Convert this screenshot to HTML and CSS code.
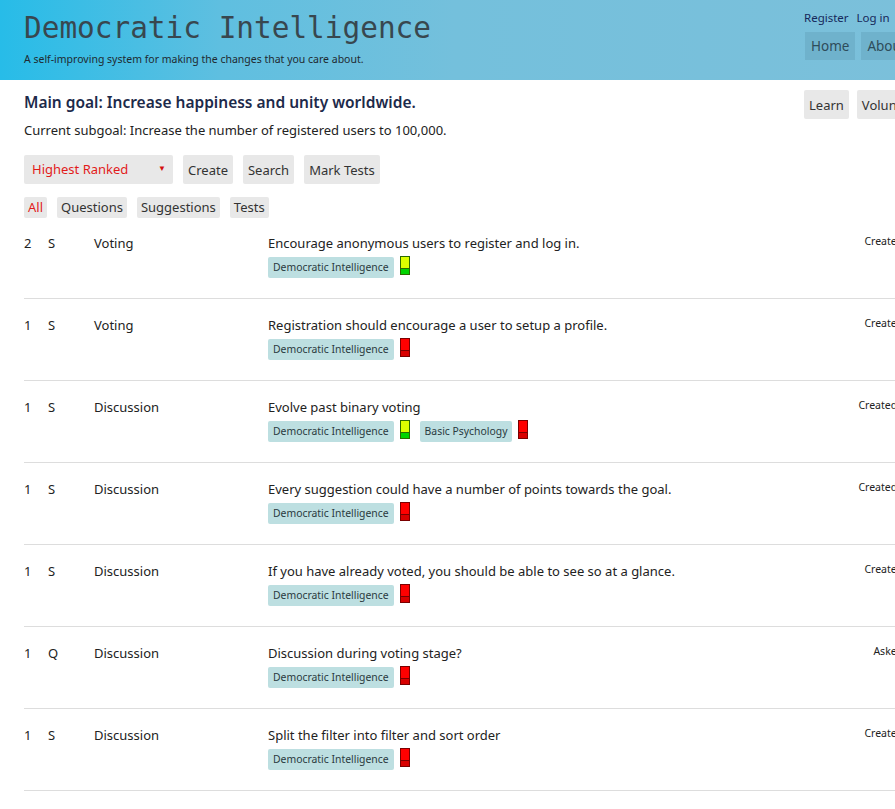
FILE: index.html
```html
<!DOCTYPE html>
<html lang="en">
<head>
<meta charset="utf-8">
<title>Democratic Intelligence</title>
<link rel="stylesheet" href="styles.css">
</head>
<body>
<div class="site">
  <header class="site-header">
    <div class="brand">
      <h1 class="brand-title">Democratic Intelligence</h1>
      <p class="brand-tagline">A self-improving system for making the changes that you care about.</p>
    </div>
    <nav class="top-nav">
      <div class="account-links">
        <a href="#">Register</a>
        <a href="#">Log in</a>
      </div>
      <div class="nav-buttons">
        <a class="nav-btn" href="#">Home</a>
        <a class="nav-btn" href="#">About</a>
      </div>
    </nav>
  </header>

  <main class="page">
    <section class="goal-row">
      <div class="goals">
        <h2 class="main-goal">Main goal: Increase happiness and unity worldwide.</h2>
        <p class="subgoal">Current subgoal: Increase the number of registered users to 100,000.</p>
      </div>
      <div class="goal-buttons">
        <button class="btn">Learn</button>
        <button class="btn">Volunteer</button>
      </div>
    </section>

    <div class="toolbar">
      <div class="select">Highest Ranked<span class="caret">&#9660;</span></div>
      <button class="btn">Create</button>
      <button class="btn">Search</button>
      <button class="btn">Mark Tests</button>
    </div>

    <div class="filters">
      <button class="chip active">All</button>
      <button class="chip">Questions</button>
      <button class="chip">Suggestions</button>
      <button class="chip">Tests</button>
    </div>

    <ul class="items">
      <li class="item">
        <span class="score">2</span><span class="kind">S</span><span class="cat">Voting</span>
        <div class="body">
          <div class="title">Encourage anonymous users to register and log in.</div>
          <div class="tags"><span class="tag">Democratic Intelligence</span><span class="meter yellow"></span></div>
        </div>
        <span class="meta">Created 3 months ago</span>
      </li>
      <li class="item">
        <span class="score">1</span><span class="kind">S</span><span class="cat">Voting</span>
        <div class="body">
          <div class="title">Registration should encourage a user to setup a profile.</div>
          <div class="tags"><span class="tag">Democratic Intelligence</span><span class="meter red"></span></div>
        </div>
        <span class="meta">Created 3 months ago</span>
      </li>
      <li class="item">
        <span class="score">1</span><span class="kind">S</span><span class="cat">Discussion</span>
        <div class="body">
          <div class="title">Evolve past binary voting</div>
          <div class="tags"><span class="tag">Democratic Intelligence</span><span class="meter yellow"></span><span class="tag">Basic Psychology</span><span class="meter red"></span></div>
        </div>
        <span class="meta">Created 10 months ago</span>
      </li>
      <li class="item">
        <span class="score">1</span><span class="kind">S</span><span class="cat">Discussion</span>
        <div class="body">
          <div class="title">Every suggestion could have a number of points towards the goal.</div>
          <div class="tags"><span class="tag">Democratic Intelligence</span><span class="meter red"></span></div>
        </div>
        <span class="meta">Created 10 months ago</span>
      </li>
      <li class="item">
        <span class="score">1</span><span class="kind">S</span><span class="cat">Discussion</span>
        <div class="body">
          <div class="title">If you have already voted, you should be able to see so at a glance.</div>
          <div class="tags"><span class="tag">Democratic Intelligence</span><span class="meter red"></span></div>
        </div>
        <span class="meta">Created 3 months ago</span>
      </li>
      <li class="item">
        <span class="score">1</span><span class="kind">Q</span><span class="cat">Discussion</span>
        <div class="body">
          <div class="title">Discussion during voting stage?</div>
          <div class="tags"><span class="tag">Democratic Intelligence</span><span class="meter red"></span></div>
        </div>
        <span class="meta">Asked 3 months ago</span>
      </li>
      <li class="item">
        <span class="score">1</span><span class="kind">S</span><span class="cat">Discussion</span>
        <div class="body">
          <div class="title">Split the filter into filter and sort order</div>
          <div class="tags"><span class="tag">Democratic Intelligence</span><span class="meter red"></span></div>
        </div>
        <span class="meta">Created 3 months ago</span>
      </li>
    </ul>
  </main>
</div>
</body>
</html>
```

FILE: styles.css
```css
html { overflow: hidden; }
body {
  margin: 0;
  font-family: "Noto Sans", "Open Sans", sans-serif;
  font-size: 13px;
  color: #222;
  background: #fff;
}
.site { width: 1010px; }

.site-header {
  height: 80px;
  box-sizing: border-box;
  padding: 0 24px;
  display: flex;
  justify-content: space-between;
  background: linear-gradient(to right, #27bce8 0%, #5fbfe0 22%, #74c0dc 45%, #7dc0da 100%);
}
.brand-title {
  margin: 8px 0 0;
  font-family: "DejaVu Sans Mono", monospace;
  font-weight: normal;
  font-size: 29.4px;
  line-height: 40px;
  color: #38474f;
}
.brand-tagline {
  margin: 4px 0 0;
  font-size: 10.5px;
  color: #1f2a30;
}
.top-nav { width: 182px; padding-top: 10px; }
.account-links { display: flex; gap: 8px; font-size: 11.5px; line-height: 16px; }
.account-links a { color: #16285a; text-decoration: none; }
.nav-buttons { display: flex; gap: 6px; margin-top: 6px; margin-left: 1px; }
.nav-btn {
  display: block;
  height: 28px;
  line-height: 28px;
  padding: 0 6px;
  background: #6fb2cc;
  color: #2e4c5a;
  font-size: 13.5px;
  text-decoration: none;
}

.page { padding: 0 0 0 24px; }
.goal-row { display: flex; justify-content: space-between; padding-right: 24px; padding-top: 10px; }
.main-goal {
  margin: 1px 0 0;
  font-size: 15.5px;
  font-weight: 600;
  line-height: 22px;
  color: #1d2a4a;
}
.subgoal { margin: 8px 0 0; font-size: 13px; line-height: 18px; color: #222; }
.goal-buttons { width: 182px; display: flex; gap: 8px; }
.btn {
  height: 29px;
  padding: 0 5px;
  border: 0;
  border-radius: 2px;
  background: #e8e8e8;
  color: #333;
  font-family: inherit;
  font-size: 13px;
}
.toolbar { display: flex; gap: 10px; margin-top: 16px; }
.toolbar .btn { padding: 0 5px; }
.select {
  width: 149px;
  height: 29px;
  box-sizing: border-box;
  padding: 0 8px;
  line-height: 29px;
  background: #e8e8e8;
  border-radius: 2px;
  color: #e21b1b;
  font-size: 13px;
  display: flex;
  justify-content: space-between;
}
.caret { font-size: 8px; line-height: 26px; color: #d41010; margin-right: -1px; }
.filters { display: flex; gap: 10px; margin-top: 13px; }
.chip {
  height: 21px;
  padding: 0 4px;
  border: 0;
  border-radius: 2px;
  background: #e8e8e8;
  color: #333;
  font-family: inherit;
  font-size: 13px;
  line-height: 21px;
}
.chip.active { color: #e21b1b; }

.items { list-style: none; margin: -1px 0 0; padding: 0; }
.item {
  display: grid;
  grid-template-columns: 24px 46px 174px 1fr 160px;
  align-items: start;
  padding: 16px 0 19px;
  border-bottom: 1px solid #ddd;
  font-size: 13px;
  line-height: 20px;
}
.score, .kind, .cat { color: #222; }
.title { color: #222; }
.tags { display: flex; align-items: flex-start; margin-top: 4px; height: 22px; }
.tag {
  height: 21px;
  line-height: 21px;
  padding: 0 5px;
  background: #bddfe1;
  border-radius: 2px;
  font-size: 10.4px;
  color: #2a3a40;
}
.meter {
  width: 8px;
  height: 17px;
  margin: -1px 10px 0 6px;
  border: 1px solid #333;
  box-sizing: content-box;
}
.meter.yellow {
  border-color: #2a6a00;
  background: linear-gradient(to bottom, #dcff00 0, #dcff00 11px, #2a6a00 11px, #2a6a00 12px, #00d400 12px);
}
.meter.red {
  border-color: #7a0000;
  background: linear-gradient(to bottom, #ff0000 0, #ff0000 11px, #7a0000 11px, #7a0000 12px, #d80000 12px);
}
.meta {
  font-size: 10.5px;
  line-height: 16px;
  color: #222;
  text-align: right;
  padding-right: 36px;
}
```
